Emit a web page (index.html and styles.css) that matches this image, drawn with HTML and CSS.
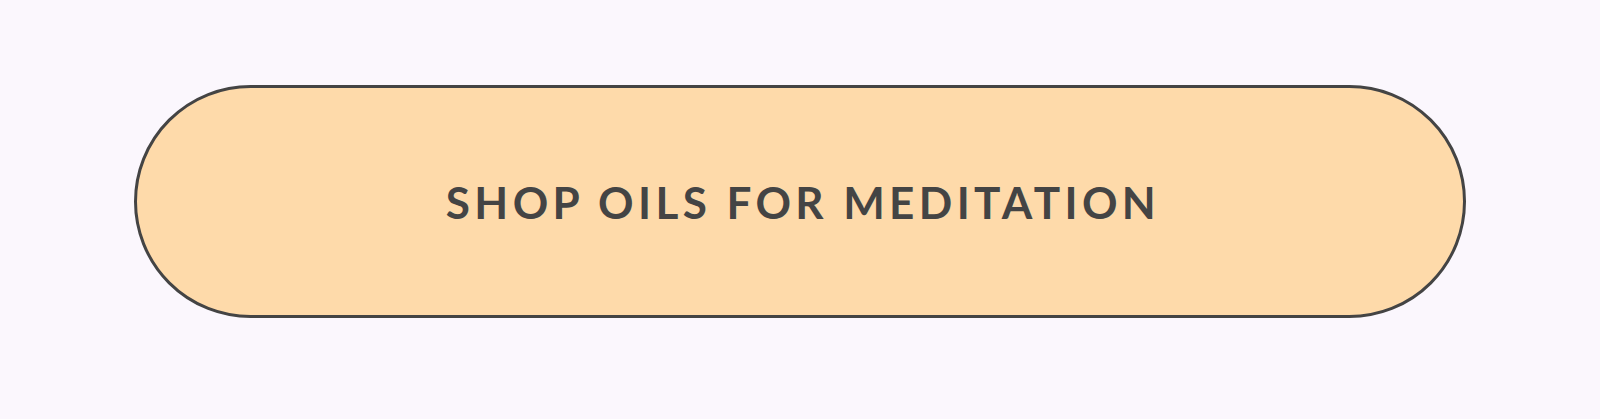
FILE: index.html
```html
<!DOCTYPE html>
<html lang="en">

<head>
    <meta charset="UTF-8">
    <meta name="viewport" content="width=device-width, initial-scale=1.0">
    <title>Shop Oils</title>
    <link rel="stylesheet" href="styles.css">
</head>

<body>
    <div class="wrap">
        <a class="shop-btn" href="#">Shop oils for meditation</a>
    </div>
</body>

</html>
```

FILE: styles.css
```css
/* Page */

body {
    margin: 0;
    background: #fbf7fd;
    font-family: 'Lato', 'Liberation Sans', sans-serif;
}

.wrap {
    padding: 85px 134px 101px;
}
/* Button */

.shop-btn {
    display: flex;
    align-items: center;
    justify-content: center;
    height: 233px;
    box-sizing: border-box;
    padding-left: 6px;
    background: #fedaaa;
    border: 3px solid #444444;
    border-radius: 117px;
    color: #444444;
    font-size: 44px;
    font-weight: 700;
    letter-spacing: 4.4px;
    text-transform: uppercase;
    text-decoration: none;
}
```
